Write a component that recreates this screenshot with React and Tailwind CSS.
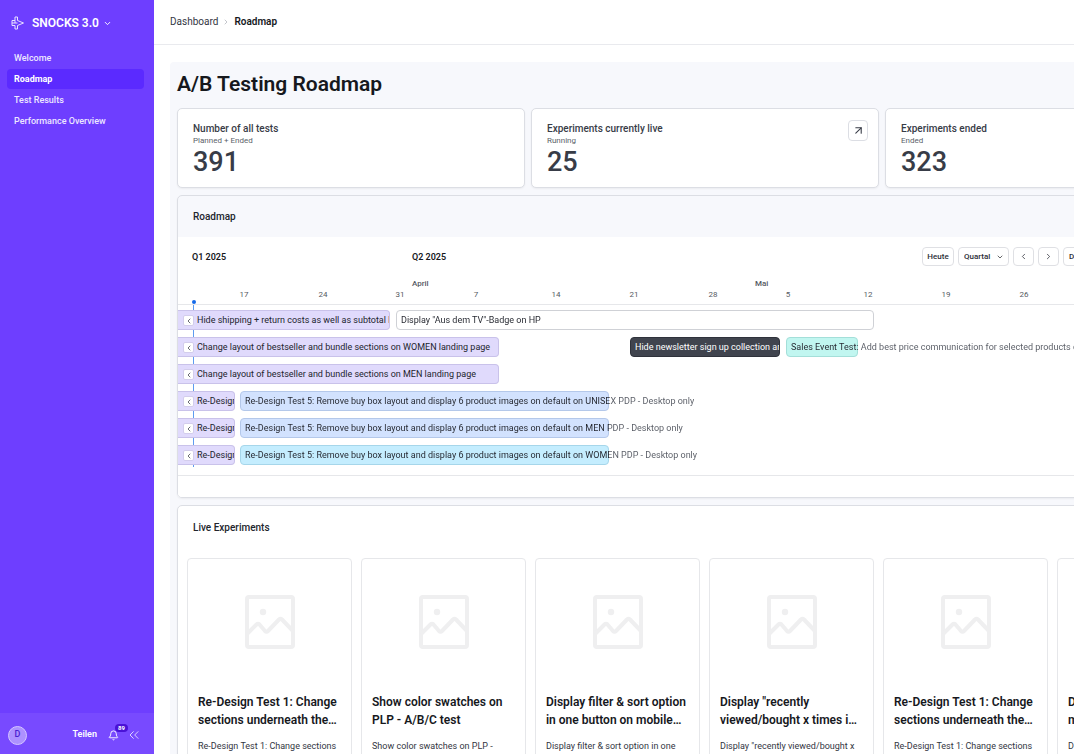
import React, { useState } from "react";
import {
  ArrowUpRight,
  Bell,
  ChevronDown,
  ChevronLeft,
  ChevronRight,
  ChevronsLeft,
} from "lucide-react";

const navItems = ["Welcome", "Roadmap", "Test Results", "Performance Overview"];

const stats = [
  { title: "Number of all tests", sub: "Planned + Ended", value: "391" },
  { title: "Experiments currently live", sub: "Running", value: "25", link: true },
  { title: "Experiments ended", sub: "Ended", value: "323" },
];

// Positions on the time axis, in pixels from its left edge
const quarters = [
  { label: "Q1 2025", left: 14 },
  { label: "Q2 2025", left: 234 },
];

const months = [
  { label: "April", left: 234 },
  { label: "Mai", left: 577 },
];

const weeks = [
  { label: "17", left: 66 },
  { label: "24", left: 145 },
  { label: "31", left: 222 },
  { label: "7", left: 298 },
  { label: "14", left: 378 },
  { label: "21", left: 456 },
  { label: "28", left: 535 },
  { label: "5", left: 610 },
  { label: "12", left: 690 },
  { label: "19", left: 768 },
  { label: "26", left: 846 },
];

const colors = {
  purple: "border-[#c9c2ea] bg-[#e0dafc] text-[#22252d]",
  blue: "border-[#b4c8ea] bg-[#d2e2fe] text-[#22252d]",
  cyan: "border-[#a6d6ea] bg-[#c4edfe] text-[#22252d]",
  teal: "border-[#a4dfd9] bg-[#c1f6f0] text-[#22252d]",
  white: "border-[#cfd1d6] bg-white text-[#22252d]",
  dark: "border-[#2f323b] bg-[#40444e] text-white",
};

const rows = [
  [
    { left: 0, width: 212, color: "purple", back: true, clip: true, text: "Hide shipping + return costs as well as subtotal below" },
    { left: 218, width: 478, color: "white", text: 'Display "Aus dem TV"-Badge on HP' },
  ],
  [
    { left: 0, width: 321, color: "purple", back: true, text: "Change layout of bestseller and bundle sections on WOMEN landing page" },
    { left: 452, width: 150, color: "dark", clip: true, text: "Hide newsletter sign up collection and" },
    { left: 608, width: 72, color: "teal", text: "Sales Event Test: Add best price communication for selected products on PDP" },
  ],
  [
    { left: 0, width: 321, color: "purple", back: true, text: "Change layout of bestseller and bundle sections on MEN landing page" },
  ],
  [
    { left: 0, width: 57, color: "purple", back: true, clip: true, text: "Re-Design Test" },
    { left: 62, width: 369, color: "blue", text: "Re-Design Test 5: Remove buy box layout and display 6 product images on default on UNISEX PDP - Desktop only" },
  ],
  [
    { left: 0, width: 57, color: "purple", back: true, clip: true, text: "Re-Design Test" },
    { left: 62, width: 369, color: "blue", text: "Re-Design Test 5: Remove buy box layout and display 6 product images on default on MEN PDP - Desktop only" },
  ],
  [
    { left: 0, width: 57, color: "purple", back: true, clip: true, text: "Re-Design Test" },
    { left: 62, width: 369, color: "cyan", text: "Re-Design Test 5: Remove buy box layout and display 6 product images on default on WOMEN PDP - Desktop only" },
  ],
];

const experiments = [
  { title: ["Re-Design Test 1: Change", "sections underneath the…"], text: "Re-Design Test 1: Change sections" },
  { title: ["Show color swatches on", "PLP - A/B/C test"], text: "Show color swatches on PLP -" },
  { title: ["Display filter & sort option", "in one button on mobile…"], text: "Display filter & sort option in one" },
  { title: ['Display "recently', "viewed/bought x times i…"], text: 'Display "recently viewed/bought x' },
  { title: ["Re-Design Test 1: Change", "sections underneath the…"], text: "Re-Design Test 1: Change sections" },
  { title: ["Display filter & sort", "mobile…"], text: "Display filter & sort option in one" },
];

const Logo = () => (
  <svg width="14" height="14" viewBox="0 0 14 14" fill="none" stroke="#e9e2ff" strokeWidth="1" strokeLinejoin="round">
    <path d="M4 1h2.500v3.500L12.500 7 6.500 9.500V13H4V9.500H1v-5h3z" />
    <path d="M1 7h5.500M4 4.500V7" />
  </svg>
);

const Placeholder = () => (
  <svg width="50" height="54" viewBox="0 0 50 54" fill="none" stroke="#efeff0" strokeWidth="4">
    <rect x="2" y="2" width="46" height="50" rx="2" />
    <circle cx="18" cy="17" r="3.2" fill="#efeff0" stroke="none" />
    <path d="M2 39l9.500-9.500q1.500-1.500 3 0l5.500 6.500q1.500 1.500 3 0L34 24.500q1.500-1.500 3 0L48 36" />
  </svg>
);

const Sidebar = ({ active, onSelect }) => (
  <aside className="flex w-[154px] shrink-0 flex-col bg-[#6e3eff] text-white">
    <button className="flex h-[46px] items-center gap-[7px] pl-[11px] text-left">
      <Logo />
      <span className="flex items-center gap-1 text-[12px] font-semibold">
        SNOCKS 3.0
        <ChevronDown size={9} strokeWidth={2.5} />
      </span>
    </button>
    <nav className="flex flex-col gap-px px-[7px] pt-[2px] pr-[10px]">
      {navItems.map((item) => (
        <a
          key={item}
          href="#"
          onClick={() => onSelect(item)}
          className={
            item === active
              ? "rounded bg-[#5b2aff] px-[7px] text-[9px] leading-[20px] font-bold"
              : "rounded px-[7px] text-[9px] leading-[20px] font-medium text-[#ede7ff]"
          }
        >
          {item}
        </a>
      ))}
    </nav>
    <footer className="mt-auto flex h-[41px] items-center bg-[#784aff] pt-[3px] pl-2">
      <span className="flex size-[19px] items-center justify-center rounded-full border border-[#d5c6ff] bg-[#ad91ff] text-[9px] font-medium text-[#4a1fd0]">
        D
      </span>
      <button className="ml-auto text-[9px] font-semibold">Teilen</button>
      <button aria-label="89" className="relative ml-[11px]">
        <Bell size={11} />
        <span className="absolute -top-[6px] left-[7px] rounded-full bg-[#4a12d6] px-[3px] text-[6px] leading-[8px] font-bold">
          89
        </span>
      </button>
      <button className="mr-[12px] ml-[7px] text-[#dccfff]">
        <ChevronsLeft size={16} strokeWidth={1.5} />
      </button>
    </footer>
  </aside>
);

const StatCard = ({ stat }) => (
  <div className="flex h-20 justify-between rounded-[5px] border border-[#dcdee4] bg-white px-[15px] pt-[13px] shadow-xs">
    <div className="text-[#383c47]">
      <h2 className="text-[10px] leading-[14px] font-medium">{stat.title}</h2>
      <p className="text-[8px] leading-[10px] text-[#5b5f69]">{stat.sub}</p>
      <p className="text-[27px] leading-[32px] font-medium">{stat.value}</p>
    </div>
    {stat.link && (
      <button className="-mt-[2px] -mr-[5px] flex h-[21px] w-5 items-center justify-center rounded border border-[#dcdee4]">
        <ArrowUpRight size={13} strokeWidth={2} className="text-[#383c47]" />
      </button>
    )}
  </div>
);

const controlStyle =
  "flex h-[19px] items-center rounded border border-[#dfe0e4] bg-white text-[8px] font-medium text-[#2b2e37]";

// Text that runs past the end of its bar goes on in grey
const BarLabel = ({ bar }) => {
  const edge = bar.width - 5;
  return (
    <span
      className="bg-clip-text text-transparent"
      style={{ backgroundImage: `linear-gradient(90deg, #22252d ${edge}px, #565a63 ${edge}px)` }}
    >
      {bar.text}
    </span>
  );
};

const Bar = ({ bar }) => (
  <div
    className={`absolute top-0 flex h-5 items-center border pt-px text-[9px] whitespace-nowrap ${colors[bar.color]} ${
      bar.back ? "rounded-r border-l-0 pl-[5px]" : "rounded pl-1"
    } ${bar.clip ? "overflow-hidden" : ""}`}
    style={{ left: bar.left, width: bar.width }}
  >
    {bar.back && (
      <button className="mr-[3px] flex size-[11px] shrink-0 items-center justify-center rounded-[2px] border border-[#d3cdec] bg-white">
        <ChevronLeft size={8} className="shrink-0" />
      </button>
    )}
    {bar.clip || bar.back ? <span>{bar.text}</span> : <BarLabel bar={bar} />}
  </div>
);

const Timeline = () => (
  <div className="bg-white">
    <div className="relative h-[40px] text-[9px] font-semibold text-[#16181d]">
      {quarters.map((q) => (
        <span key={q.label} className="absolute top-[14px] leading-[12px]" style={{ left: q.left }}>
          {q.label}
        </span>
      ))}
      <div className="absolute top-[10px] left-[744px] flex gap-1">
        <button className={`${controlStyle} w-8 justify-center`}>Heute</button>
        <div className="relative">
          <select aria-label="Quartal" className={`${controlStyle} w-[51px] appearance-none pl-[5px]`}>
            <option>Quartal</option>
          </select>
          <ChevronDown size={8} className="pointer-events-none absolute top-[6px] right-[5px]" />
        </div>
        <button className={`${controlStyle} w-[21px] justify-center`}>
          <ChevronLeft size={9} />
        </button>
        <button className={`${controlStyle} w-[21px] justify-center`}>
          <ChevronRight size={9} />
        </button>
        <button className={`${controlStyle} px-[5px]`}>Drucken</button>
      </div>
    </div>
    <div className="relative h-[28px] border-b border-[#e6e7ea] text-[8px] leading-[10px] text-[#565a63]">
      {months.map((m) => (
        <span key={m.label} className="absolute top-[2px] font-medium" style={{ left: m.left }}>
          {m.label}
        </span>
      ))}
      {weeks.map((w) => (
        <span key={w.label} className="absolute top-[13px] w-4 -translate-x-2 text-center" style={{ left: w.left }}>
          {w.label}
        </span>
      ))}
    </div>
    <div className="relative flex h-[171px] flex-col gap-[7px] border-b border-[#e6e7ea] pt-[5px]">
      <span className="absolute top-0 left-[15px] h-[162px] w-px bg-[#5d9bf0]" />
      <span className="absolute -top-[5px] left-[14px] size-[4px] rounded-full bg-[#1369ea]" />
      {rows.map((row, i) => (
        <div key={i} className="relative h-5">
          {row.map((bar) => (
            <Bar key={bar.left} bar={bar} />
          ))}
        </div>
      ))}
    </div>
    <div className="h-[21px]" />
  </div>
);

const ExperimentCard = ({ item }) => (
  <article className="h-[260px] w-[165px] shrink-0 rounded border border-[#e6e7ea] bg-white">
    <div className="flex h-[126px] items-center justify-center">
      <Placeholder />
    </div>
    <div className="px-[10px] pt-2">
      <h3 className="text-[12px] leading-[18px] font-semibold whitespace-nowrap text-[#16181d]">
        {item.title[0]}
        <br />
        {item.title[1]}
      </h3>
      <p className="mt-[10px] text-[9px] leading-[14px] whitespace-nowrap text-[#33363f]">{item.text}</p>
    </div>
  </article>
);

const App = () => {
  const [active, setActive] = useState("Roadmap");

  return (
    <div className="flex h-screen overflow-hidden bg-white font-['Roboto',sans-serif]">
      <Sidebar active={active} onSelect={setActive} />
      <div className="flex min-w-0 flex-1 flex-col">
        <header className="flex h-[45px] shrink-0 items-center gap-1 border-b border-[#e9eaee] pb-px pl-4 text-[10px] text-[#33363f]">
          <a href="#">Dashboard</a>
          <ChevronRight size={8} className="text-[#a6a9b2]" />
          <span className="font-semibold text-[#16181d]">Roadmap</span>
        </header>
        <main className="min-h-0 flex-1 overflow-hidden pt-[17px] pl-4">
          <div className="min-w-[1070px] rounded-tl bg-[#f7f8fc] px-[7px] pt-[7px]">
            <h1 className="h-[39px] text-[21px] leading-[31px] font-semibold text-[#16181d]">
              A/B Testing Roadmap
            </h1>
            <div className="grid grid-cols-3 gap-[6px]">
              {stats.map((stat) => (
                <StatCard key={stat.title} stat={stat} />
              ))}
            </div>
            <section className="mt-[7px] overflow-hidden rounded-[5px] border border-[#dcdee4] shadow-xs">
              <h2 className="pl-[15px] text-[10px] leading-[41px] font-medium text-[#22252d]">Roadmap</h2>
              <Timeline />
            </section>
            <section className="mt-[7px] rounded-[5px] border border-[#dcdee4] bg-white shadow-xs">
              <h2 className="pl-[15px] text-[10px] leading-[44px] font-medium text-[#22252d]">
                Live Experiments
              </h2>
              <div className="flex gap-[9px] overflow-hidden px-[9px] pt-2">
                {experiments.map((item, i) => (
                  <ExperimentCard key={i} item={item} />
                ))}
              </div>
            </section>
          </div>
        </main>
      </div>
    </div>
  );
};

export default App;
